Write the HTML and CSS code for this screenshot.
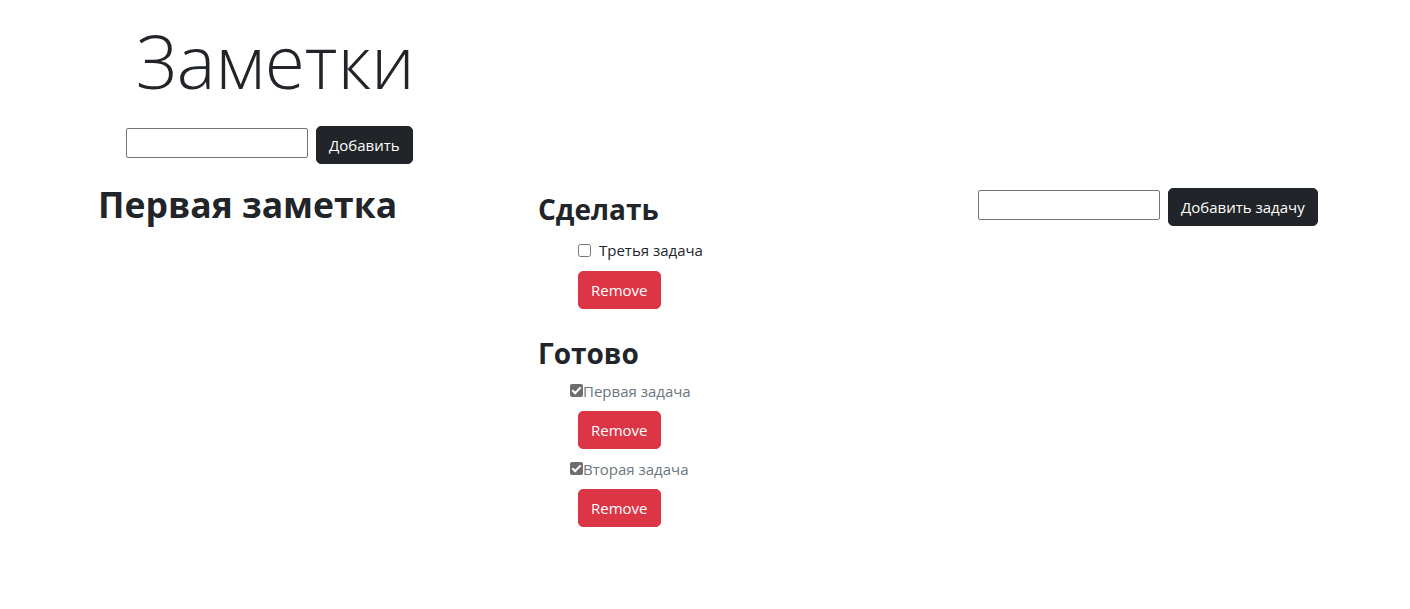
FILE: index.html
```html
<!DOCTYPE html>
<html lang="ru">
<head>
<meta charset="utf-8">
<title>Заметки</title>
<link rel="stylesheet" href="styles.css">
</head>
<body>
<div class="app">
  <header class="top">
    <h1 class="title">Заметки</h1>
    <form class="add-form add-note">
      <input type="text" class="field field-note">
      <button type="button" class="btn btn-dark">Добавить</button>
    </form>
  </header>
  <main class="board">
    <section class="col-note">
      <h2 class="note-title">Первая заметка</h2>
    </section>
    <section class="col-tasks">
      <h3 class="group-title">Сделать</h3>
      <ul class="task-list todo">
        <li class="task">
          <label class="task-label"><input type="checkbox" class="check"> Третья задача</label>
          <button type="button" class="btn btn-danger">Remove</button>
        </li>
      </ul>
      <h3 class="group-title done-title">Готово</h3>
      <ul class="task-list done">
        <li class="task">
          <label class="task-label"><input type="checkbox" class="check check-done" checked disabled>Первая задача</label>
          <button type="button" class="btn btn-danger">Remove</button>
        </li>
        <li class="task">
          <label class="task-label"><input type="checkbox" class="check check-done" checked disabled>Вторая задача</label>
          <button type="button" class="btn btn-danger">Remove</button>
        </li>
      </ul>
    </section>
    <section class="col-add">
      <form class="add-form add-task">
        <input type="text" class="field field-task">
        <button type="button" class="btn btn-dark">Добавить задачу</button>
      </form>
    </section>
  </main>
</div>
</body>
</html>
```

FILE: styles.css
```css
* { box-sizing: border-box; }

body {
  margin: 0;
  font-family: "Open Sans", "Noto Sans", sans-serif;
  font-size: 16px;
  line-height: 1.5;
  color: #212529;
  background: #fff;
}

.top {
  padding-top: 17px;
}

.title {
  margin: 0 0 0 136px;
  font-size: 73px;
  font-weight: 300;
  line-height: 1.2;
}

.add-form {
  display: flex;
  align-items: flex-start;
  gap: 8px;
}

.add-note {
  margin: 21px 0 0 126px;
}

.field {
  width: 182px;
  height: 30px;
  margin-top: 2px;
  padding: 1px 2px;
  border: 1px solid #767676;
  border-radius: 2px;
  font: inherit;
  background: #fff;
}

.btn {
  display: inline-block;
  height: 38px;
  padding: 6px 12px;
  border: 1px solid transparent;
  border-radius: 5px;
  font-family: inherit;
  font-size: 15px;
  line-height: 24px;
  color: #fff;
  cursor: pointer;
}

.btn-dark {
  background: #212529;
  border-color: #212529;
}

.btn-danger {
  background: #dc3545;
  border-color: #dc3545;
}

.board {
  display: flex;
  align-items: flex-start;
  margin-top: 19px;
}

.col-note {
  width: 538px;
  padding-left: 98px;
}

.note-title {
  margin: 0;
  font-size: 35.5px;
  font-weight: 700;
  line-height: 1.2;
}

.col-tasks {
  width: 440px;
  padding-top: 10px;
}

.group-title {
  margin: 0;
  font-size: 28px;
  font-weight: 700;
  line-height: 1.2;
}

.done-title {
  margin-top: 28px;
}

.task-list {
  list-style: none;
  margin: 0;
  padding: 0 0 0 32px;
}

.task {
  display: flex;
  flex-direction: column;
  align-items: flex-start;
}

.task-label {
  display: flex;
  align-items: center;
  height: 24px;
  font-size: 15px;
}

.todo .task-label {
  margin: 12px 0 9px;
  padding-left: 8px;
  gap: 8px;
}

.todo .btn {
  margin-left: 8px;
}

.done .task-label {
  margin: 8px 0;
  color: #6c757d;
}

.done .btn {
  margin-left: 8px;
}

.check {
  width: 13px;
  height: 13px;
  margin: 0;
}

.check-done {
  appearance: none;
  -webkit-appearance: none;
  position: relative;
  background: #6e6e6e;
  border-radius: 2px;
}

.check-done::after {
  content: "";
  position: absolute;
  left: 4px;
  top: 1px;
  width: 3px;
  height: 7px;
  border: solid #fff;
  border-width: 0 2px 2px 0;
  transform: rotate(45deg);
}

.col-add {
  padding-top: 5px;
}
```
